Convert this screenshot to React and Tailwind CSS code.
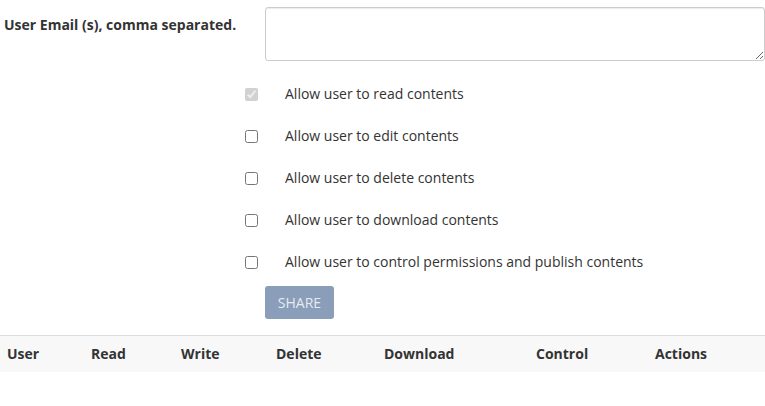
import React, { useState } from 'react';

const permissions = [
    { key: 'read', label: 'Allow user to read contents', checked: true, disabled: true },
    { key: 'edit', label: 'Allow user to edit contents' },
    { key: 'delete', label: 'Allow user to delete contents' },
    { key: 'download', label: 'Allow user to download contents' },
    { key: 'control', label: 'Allow user to control permissions and publish contents' },
];

const columns = [
    { label: 'User', w: 'w-[84px]' },
    { label: 'Read', w: 'w-[90px]' },
    { label: 'Write', w: 'w-[95px]' },
    { label: 'Delete', w: 'w-[108px]' },
    { label: 'Download', w: 'w-[152px]' },
    { label: 'Control', w: 'w-[119px]' },
    { label: 'Actions', w: '' },
];

const App = () => {
    const [emails, setEmails] = useState('');

    return (
        <div className="w-[765px] bg-white text-[#333] font-['Open_Sans',sans-serif] text-sm">
            {/* Email input */}
            <div className="flex pt-[7px]">
                <label className="w-[265px] pl-1 pt-[8px] font-bold text-sm leading-5">
                    User Email (s), comma separated.
                </label>
                <textarea
                    value={emails}
                    onChange={(e) => setEmails(e.target.value)}
                    className="flex-1 h-[54px] border border-[#ccc] rounded-[3px] shadow-[inset_0_1px_1px_rgba(0,0,0,0.075)] outline-none px-3 py-1.5"
                />
            </div>

            {/* Permissions */}
            <div className="pt-[23px] flex flex-col gap-[22px]">
                {permissions.map(p => (
                    <label key={p.key} className="flex items-center h-[20px]">
                        <span className="w-[285px] pl-[245px] flex items-center">
                            <input
                                type="checkbox"
                                defaultChecked={p.checked}
                                disabled={p.disabled}
                                className="w-[13px] h-[13px] m-0"
                            />
                        </span>
                        <span className="leading-5">{p.label}</span>
                    </label>
                ))}
            </div>

            <div className="pl-[265px] pt-[14px]">
                <button className="h-[33px] w-[69px] rounded-[3px] bg-[#8a9db9] text-[#e6ebf2] text-sm">
                    SHARE
                </button>
            </div>

            {/* Shared users table */}
            <table className="mt-[16px] w-full border-collapse">
                <thead>
                    <tr className="bg-[#f8f8f8] border-t border-[#ddd]">
                        {columns.map(c => (
                            <th key={c.label} className={`${c.w} h-[36px] pl-[7px] text-left font-bold text-sm`}>
                                {c.label}
                            </th>
                        ))}
                    </tr>
                </thead>
                <tbody />
            </table>
        </div>
    );
};

export default App;
